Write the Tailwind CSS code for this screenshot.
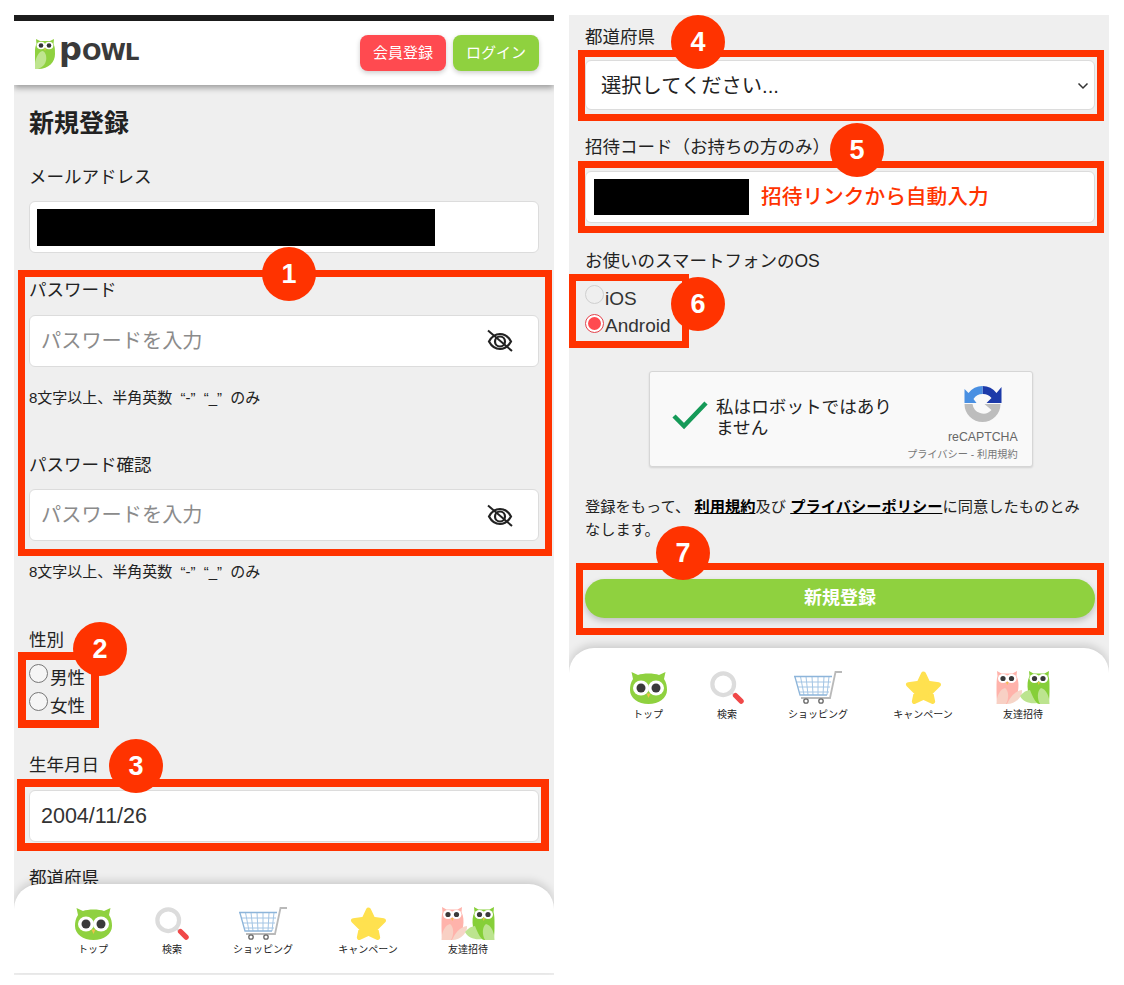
<!DOCTYPE html>
<html lang="ja">
<head>
<meta charset="utf-8">
<script src="https://cdn.jsdelivr.net/npm/@tailwindcss/browser@4"></script>
<title>POWL</title>
</head>
<body class="bg-white font-['Liberation_Sans','Noto_Sans_CJK_JP',sans-serif] text-[#222]">
<svg class="absolute w-0 h-0" aria-hidden="true">
  <defs>
    <symbol id="nav-top" viewBox="0 0 37 33">
      <path d="M1.500 1L8 4C13 2 24 2 29 4L35.500 1L34 8C36.500 12 37 15 37 19C37 27 29 33 18.500 33C8 33 0 27 0 19C0 15 .5 12 3 8Z" fill="#8fd13f"/>
      <ellipse cx="11" cy="17" rx="8" ry="7.500" fill="#fff"/><ellipse cx="26" cy="17" rx="8" ry="7.500" fill="#fff"/>
      <circle cx="11" cy="17" r="4.500" fill="#3a3a3a"/><circle cx="26" cy="17" r="4.500" fill="#3a3a3a"/>
      <path d="M16.500 22.500H20.500L18.500 27Z" fill="#f0c14b"/>
    </symbol>
    <symbol id="nav-search" viewBox="0 0 36 35">
      <circle cx="14" cy="14" r="11.500" fill="none" stroke="#dcdcdc" stroke-width="4.500"/>
      <path d="M23 23L26 26" stroke="#dcdcdc" stroke-width="2.500"/>
      <path d="M27 26L33 32" stroke="#f04848" stroke-width="5.500" stroke-linecap="round"/>
    </symbol>
    <symbol id="nav-cart" viewBox="0 0 48 33">
      <path d="M0 5.500H38M2 11H37M4 16H36M5.500 21H35M6.500 5.500L10 24M12 5.500L14 24M18 5.500L19 24M24 5.500V24M30 5.500L29 24M35 5.500L33 24" fill="none" stroke="#a4c5e4" stroke-width="1"/>
      <path d="M0 5.500H38M1 6L6 24H33" fill="none" stroke="#8db5da" stroke-width="1.300"/>
      <path d="M48 1H41.500L36 27H7" fill="none" stroke="#b9b9b9" stroke-width="1.800"/>
      <circle cx="12" cy="30" r="2.200" fill="#fff" stroke="#666" stroke-width="1.300"/><circle cx="27" cy="30" r="2.200" fill="#fff" stroke="#666" stroke-width="1.300"/>
    </symbol>
    <symbol id="nav-star" viewBox="0 0 37 34">
      <path d="M18.500 3L23 12.500L34 14L26 22L28 31.500L18.500 27L9 31.500L11 22L3 14L14 12.500Z" fill="#ffe14f" stroke="#ffe14f" stroke-width="5" stroke-linejoin="round"/>
    </symbol>
    <symbol id="nav-friends" viewBox="0 0 54 33">
      <path d="M1 0L5.500 2.500H16.500L21 0L20.500 5C22.500 9 23 14 22 20C21 26 18 31 11 33H2C1 33 .5 28 .5 18C.5 12 .5 8 1.500 5Z" fill="#ffb3ab"/>
      <path d="M.5 33C.5 25 4 18 9 17C13 20 13 28 10 33Z" fill="#f8d0c4"/>
      <path d="M11 33C14 26 19 20 26 19C27 25 20 33 11 33Z" fill="#f6d5c8"/>
      <ellipse cx="7" cy="7.500" rx="5" ry="4.500" fill="#fff"/><ellipse cx="15.500" cy="7.500" rx="5" ry="4.500" fill="#fff"/>
      <circle cx="7" cy="7.500" r="2.600" fill="#3a3a3a"/><circle cx="15.500" cy="7.500" r="2.600" fill="#3a3a3a"/>
      <path d="M10 11H12.500L11.200 14Z" fill="#f0c14b"/>
      <path d="M53 0L48.500 2.500H37.500L33 0L33.500 5C31.500 9 31 14 32 20C33 26 36 31 43 33H52C53 33 53.500 28 53.500 18C53.500 12 53.500 8 52.500 5Z" fill="#86cf39"/>
      <path d="M53.500 33C53.500 25 50 18 45 17C41 20 41 28 44 33Z" fill="#bce48f"/>
      <path d="M24 25C27 21 31 19 34 19C36 24 38 29 41 32C34 33 27 31 24 25Z" fill="#bce48f"/>
      <ellipse cx="47" cy="7.500" rx="5" ry="4.500" fill="#fff"/><ellipse cx="38.500" cy="7.500" rx="5" ry="4.500" fill="#fff"/>
      <circle cx="47" cy="7.500" r="2.600" fill="#3a3a3a"/><circle cx="38.500" cy="7.500" r="2.600" fill="#3a3a3a"/>
      <path d="M41.500 11H44L42.800 14Z" fill="#f0c14b"/>
    </symbol>
    <symbol id="eye" viewBox="0 0 26 24">
      <path d="M2 12.500C5 7 9 5 13 5C17 5 21 7 24 12.500C21 18 17 20 13 20C9 20 5 18 2 12.500Z" fill="none" stroke="#222" stroke-width="2.200"/>
      <circle cx="13" cy="12.500" r="5" fill="none" stroke="#222" stroke-width="2.200"/>
      <path d="M1 1.500L25 22" stroke="#222" stroke-width="2"/>
    </symbol>
  </defs>
</svg>

<div class="relative w-[1124px] h-[985px] overflow-hidden flex gap-[15px] pl-[14px] pt-[15px]">

  <!-- left phone -->
  <section class="relative w-[540px] h-[960px] overflow-hidden bg-[#efefef]">
    <div class="h-[6px] bg-[#1d1d1d]"></div>
    <header class="relative h-[64px] bg-white flex items-center justify-between pl-[21px] pr-[15px] shadow-[0_3px_6px_rgba(0,0,0,0.35)]">
      <div class="flex items-center">
        <svg class="w-[20px] h-[30px] mt-[1px]" viewBox="0 0 20 30">
          <path d="M1 0L5 2H15L19 0L18.500 5C20 8 20 10 20 15C20 23 14 30 3 30C0 30 0 24 0 15C0 10 0 8 1.500 5Z" fill="#8fd13f"/>
          <path d="M0 30C-1 22 3 12 8 12C13 15 13 27 3 30Z" fill="#bfe58f"/>
          <ellipse cx="6" cy="6.500" rx="4.300" ry="3.800" fill="#fff"/><ellipse cx="14" cy="6.500" rx="4.300" ry="3.800" fill="#fff"/>
          <circle cx="6" cy="6.500" r="2.300" fill="#333"/><circle cx="14" cy="6.500" r="2.300" fill="#333"/>
          <path d="M9 9.500H11L10 12Z" fill="#f0c14b"/>
        </svg>
        <div class="ml-[4px] flex items-baseline font-['DejaVu_Sans',sans-serif] font-bold text-[#3a3a3a] leading-none mt-[-9px]"><span class="text-[32px]">p</span><span class="text-[23px] tracking-[-1px]">OWL</span></div>
      </div>
      <div class="flex gap-[7px] text-white text-[15px]">
        <button class="w-[86px] h-[36px] rounded-[8px] bg-[#ff4a50] shadow-[0_2px_5px_rgba(0,0,0,0.2)]">会員登録</button>
        <button class="w-[86px] h-[36px] rounded-[8px] bg-[#8fd13f] shadow-[0_2px_5px_rgba(0,0,0,0.2)]">ログイン</button>
      </div>
    </header>

    <main class="px-[15px]">
      <h1 class="mt-[20px] h-[36px] leading-[36px] text-[25px] font-bold">新規登録</h1>
      <div class="mt-[24px] h-6 leading-6 text-[17.500px]">メールアドレス</div>
      <div class="mt-[12px] h-[52px] bg-white rounded-[6px] border border-[#dcdcdc] flex items-center pl-[7px]"><div class="w-[398px] h-[37px] bg-black"></div></div>

      <div class="mt-[25px] h-6 leading-6 text-[17.500px]">パスワード</div>
      <div class="mt-[13px] h-[52px] bg-white rounded-[6px] border border-[#dcdcdc] flex items-center justify-between pl-[11px] pr-[25px] text-[20.200px] text-[#8b8b8b]">パスワードを入力<svg class="w-[26px] h-[24px]"><use href="#eye"/></svg></div>
      <p class="mt-[21px] h-5 leading-5 text-[15px] [word-spacing:4px]">8文字以上、半角英数 “-” “_” のみ</p>

      <div class="mt-[45px] h-6 leading-6 text-[17.500px]">パスワード確認</div>
      <div class="mt-[12px] h-[52px] bg-white rounded-[6px] border border-[#dcdcdc] flex items-center justify-between pl-[11px] pr-[25px] pt-[1px] text-[20.200px] text-[#8b8b8b]">パスワードを入力<svg class="w-[26px] h-[24px]"><use href="#eye"/></svg></div>
      <p class="mt-[21px] h-5 leading-5 text-[15px] [word-spacing:4px]">8文字以上、半角英数 “-” “_” のみ</p>

      <div class="mt-[46px] h-6 leading-6 text-[17.500px]">性別</div>
      <div class="mt-[11px] text-[17.500px]">
        <div class="h-7 flex items-start"><span class="w-[19px] h-[19px] mt-[1px] rounded-full border border-[#777] bg-[#f5f5f5]"></span><span class="ml-[2px] leading-[30px]">男性</span></div>
        <div class="h-7 flex items-start"><span class="w-[19px] h-[19px] mt-[1px] rounded-full border border-[#777] bg-[#f5f5f5]"></span><span class="ml-[2px] leading-[30px]">女性</span></div>
      </div>

      <div class="mt-[34px] h-6 leading-6 text-[17.500px]">生年月日</div>
      <div class="mt-[13px] h-[52px] bg-white rounded-[6px] border border-[#dcdcdc] flex items-center pl-[11px] text-[21.500px] text-[#333]">2004/11/26</div>
      <div class="mt-[24px] h-6 leading-6 text-[17.500px]">都道府県</div>
    </main>

    <nav class="absolute left-0 right-0 top-[869px] h-[89px] bg-white rounded-t-[25px] shadow-[0_-3px_8px_rgba(0,0,0,0.15)] flex pl-[40px] pt-[23px] text-[10px]">
      <div class="w-[78px] flex flex-col items-center"><svg class="w-[37px] h-[33px]"><use href="#nav-top"/></svg><span class="mt-[3px] leading-[14px]">トップ</span></div>
      <div class="w-[80px] flex flex-col items-center"><svg class="w-[36px] h-[33px]"><use href="#nav-search"/></svg><span class="mt-[3px] leading-[14px]">検索</span></div>
      <div class="w-[102px] flex flex-col items-center"><svg class="w-[48px] h-[33px]"><use href="#nav-cart"/></svg><span class="mt-[3px] leading-[14px]">ショッピング</span></div>
      <div class="w-[108px] flex flex-col items-center"><svg class="w-[37px] h-[33px]"><use href="#nav-star"/></svg><span class="mt-[3px] leading-[14px]">キャンペーン</span></div>
      <div class="w-[92px] flex flex-col items-center"><svg class="w-[54px] h-[33px]"><use href="#nav-friends"/></svg><span class="mt-[3px] leading-[14px]">友達招待</span></div>
    </nav>
  </section>

  <!-- right phone -->
  <section class="w-[540px] self-start overflow-hidden bg-[#efefef]">
    <div class="pl-[16px] pr-[14px] pt-[10px]">
      <div class="h-6 leading-6 text-[17.500px]">都道府県</div>
      <div class="mt-[11px] h-[50px] bg-white rounded-[6px] border border-[#dcdcdc] flex items-center justify-between pl-[15px] pr-[5px] pt-[2px] text-[20.300px] text-[#222]">選択してください...
        <svg class="w-[12px] h-[8px]" viewBox="0 0 12 8"><path d="M1.500 1.500L6 6L10.500 1.500" fill="none" stroke="#333" stroke-width="1.500"/></svg>
      </div>
      <div class="mt-[25px] h-6 leading-6 text-[17.500px]">招待コード（お持ちの方のみ）</div>
      <div class="mt-[12px] h-[52px] bg-white rounded-[6px] border border-[#dcdcdc] flex items-center pl-[8px]">
        <div class="w-[155px] h-[36px] bg-black"></div>
        <span class="ml-[12px] text-[20.700px] font-medium text-[#ff3300] whitespace-nowrap">招待リンクから自動入力</span>
      </div>
      <div class="mt-[26px] h-6 leading-6 text-[17.500px]">お使いのスマートフォンのOS</div>
      <div class="mt-[11px] text-[19px] text-[#333]">
        <div class="h-[27px] flex items-start"><span class="w-[19px] h-[19px] mt-[1px] rounded-full border border-[#cfcfcf] bg-[#efefef]"></span><span class="ml-[1px] leading-[29px]">iOS</span></div>
        <div class="h-[27px] flex items-start"><span class="w-[19px] h-[19px] mt-[3px] rounded-full border border-[#e4414a] bg-white flex items-center justify-center"><span class="w-[13px] h-[13px] rounded-full bg-[#ff4a50]"></span></span><span class="ml-[1px] leading-[29px]">Android</span></div>
      </div>

      <div class="mt-[33px] ml-[64px] w-[384px] h-[96px] bg-[#f9f9f9] border border-[#d6d6d6] rounded-[3px] shadow-[0_1px_2px_rgba(0,0,0,0.12)] flex relative">
        <svg class="absolute left-[21px] top-[28px] w-[38px] h-[32px]" viewBox="0 0 38 32"><path d="M3 16L13 26L35 3" fill="none" stroke="#159a58" stroke-width="4.500"/></svg>
        <p class="absolute left-[66px] top-[25px] w-[185px] text-[17.600px] leading-[21px] text-[#222]">私はロボットではあり<br>ません</p>
        <svg class="absolute left-[312px] top-[12px] w-[41px] h-[40px]" viewBox="0 0 40 40">
          <path d="M20 2A18 18 0 0 1 34 9L39 3V19H24L29 14A11 11 0 0 0 20 10Z" fill="#1c3aa9"/>
          <path d="M20 2A18 18 0 0 0 6 9L2 5V19H14L11 15A11 11 0 0 1 20 10Z" fill="#4a90e2"/>
          <path d="M2 20H10A11 11 0 0 0 29 26L22 20H38A18 18 0 0 1 2 20Z" fill="#bdbdbd"/>
        </svg>
        <span class="absolute left-[298px] top-[57px] text-[12.300px] leading-[16px] text-[#666]">reCAPTCHA</span>
        <span class="absolute left-[257px] top-[76px] text-[10.200px] leading-[14px] text-[#777] whitespace-nowrap">プライバシー - 利用規約</span>
      </div>

      <p class="mt-[28px] w-[505px] text-[15.250px] leading-[23px] text-[#222]">登録をもって、 <a class="font-bold underline text-black">利用規約</a>及び <a class="font-bold underline text-black">プライバシーポリシー</a>に同意したものとみなします。</p>
      <button class="mt-[38px] w-[510px] h-[39px] rounded-full bg-[#8fd13f] text-white font-bold text-[18px] shadow-[0_3px_6px_rgba(0,0,0,0.2)]">新規登録</button>
    </div>
    <nav class="mt-[30px] h-[85px] bg-white rounded-t-[25px] shadow-[0_-3px_8px_rgba(0,0,0,0.15)] flex pl-[40px] pt-[23px] text-[10px]">
      <div class="w-[78px] flex flex-col items-center"><svg class="w-[37px] h-[33px]"><use href="#nav-top"/></svg><span class="mt-[4px] leading-[14px]">トップ</span></div>
      <div class="w-[80px] flex flex-col items-center"><svg class="w-[36px] h-[33px]"><use href="#nav-search"/></svg><span class="mt-[4px] leading-[14px]">検索</span></div>
      <div class="w-[102px] flex flex-col items-center"><svg class="w-[48px] h-[33px]"><use href="#nav-cart"/></svg><span class="mt-[4px] leading-[14px]">ショッピング</span></div>
      <div class="w-[108px] flex flex-col items-center"><svg class="w-[37px] h-[33px]"><use href="#nav-star"/></svg><span class="mt-[4px] leading-[14px]">キャンペーン</span></div>
      <div class="w-[92px] flex flex-col items-center"><svg class="w-[54px] h-[33px]"><use href="#nav-friends"/></svg><span class="mt-[4px] leading-[14px]">友達招待</span></div>
    </nav>
  </section>

  <!-- annotation frames -->
  <div class="absolute left-[18px] top-[270px] w-[534px] h-[286px] border-[7px] border-[#ff3300]"></div>
  <div class="absolute left-[18px] top-[652px] w-[81px] h-[76px] border-[8px] border-[#ff3300]"></div>
  <div class="absolute left-[17px] top-[779px] w-[532px] h-[72px] border-[8px] border-[#ff3300]"></div>
  <div class="absolute left-[578px] top-[50px] w-[526px] h-[71px] border-[7px] border-[#ff3300]"></div>
  <div class="absolute left-[578px] top-[161px] w-[526px] h-[72px] border-[7px] border-[#ff3300]"></div>
  <div class="absolute left-[569px] top-[274px] w-[120px] h-[74px] border-[7px] border-[#ff3300]"></div>
  <div class="absolute left-[576px] top-[563px] w-[528px] h-[72px] border-[7px] border-[#ff3300]"></div>

  <!-- number badges -->
  <div class="absolute left-[262px] top-[247px] w-[54px] h-[54px] rounded-full bg-[#ff3300] text-white font-bold text-[27px] flex items-center justify-center">1</div>
  <div class="absolute left-[73px] top-[622px] w-[54px] h-[54px] rounded-full bg-[#ff3300] text-white font-bold text-[27px] flex items-center justify-center">2</div>
  <div class="absolute left-[109px] top-[739px] w-[54px] h-[54px] rounded-full bg-[#ff3300] text-white font-bold text-[27px] flex items-center justify-center">3</div>
  <div class="absolute left-[671px] top-[15px] w-[54px] h-[54px] rounded-full bg-[#ff3300] text-white font-bold text-[27px] flex items-center justify-center">4</div>
  <div class="absolute left-[830px] top-[123px] w-[54px] h-[54px] rounded-full bg-[#ff3300] text-white font-bold text-[27px] flex items-center justify-center">5</div>
  <div class="absolute left-[671px] top-[277px] w-[54px] h-[54px] rounded-full bg-[#ff3300] text-white font-bold text-[27px] flex items-center justify-center">6</div>
  <div class="absolute left-[656px] top-[526px] w-[54px] h-[54px] rounded-full bg-[#ff3300] text-white font-bold text-[27px] flex items-center justify-center">7</div>
</div>
</body>
</html>
